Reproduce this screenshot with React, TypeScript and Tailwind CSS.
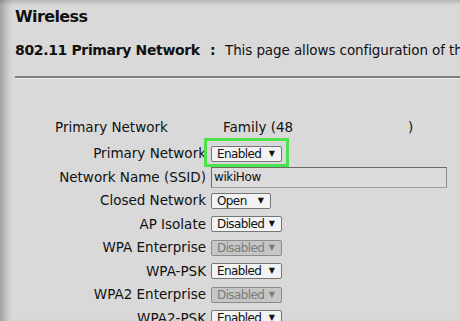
import React from "react";

type Ctrl =
  | { kind: "select"; value: string; w: number; disabled?: boolean; highlight?: boolean }
  | { kind: "input"; value: string };

const rows: { label: string; ctrl: Ctrl }[] = [
  { label: "Primary Network", ctrl: { kind: "select", value: "Enabled", w: 71, highlight: true } },
  { label: "Network Name (SSID)", ctrl: { kind: "input", value: "wikiHow" } },
  { label: "Closed Network", ctrl: { kind: "select", value: "Open", w: 60 } },
  { label: "AP Isolate", ctrl: { kind: "select", value: "Disabled", w: 71 } },
  { label: "WPA Enterprise", ctrl: { kind: "select", value: "Disabled", w: 71, disabled: true } },
  { label: "WPA-PSK", ctrl: { kind: "select", value: "Enabled", w: 71 } },
  { label: "WPA2 Enterprise", ctrl: { kind: "select", value: "Disabled", w: 71, disabled: true } },
  { label: "WPA2-PSK", ctrl: { kind: "select", value: "Enabled", w: 71 } },
];

function Select({ value, w, disabled, highlight }: { value: string; w: number; disabled?: boolean; highlight?: boolean }) {
  return (
    <div className="relative" style={{ width: w }}>
      {highlight && (
        <div className="absolute -left-[7px] -right-[7px] -top-[8px] -bottom-[5px] border-[3.5px] border-[#4be24b]" />
      )}
      <div
        className={
          disabled
            ? "relative flex h-[16px] items-center justify-between rounded-[2px] border border-[#8c8c8c] bg-[#c6c6c6] pl-[5px] pr-[6px] text-[12px] leading-none text-[#7a7a7a]"
            : "relative flex h-[16px] items-center justify-between rounded-[2px] border border-[#767676] bg-[#f3f3f3] pl-[5px] pr-[6px] text-[12px] leading-none text-[#111]"
        }
      >
        <span className="tracking-[-0.6px]">{value}</span>
        <span className="text-[8px]">▼</span>
      </div>
    </div>
  );
}

export default function App() {
  return (
    <div
      className="relative h-[321px] w-[460px] overflow-hidden bg-[#d9d9d9] text-[#111] shadow-[inset_11px_0_9px_-6px_rgba(0,0,0,0.28),inset_0_6px_5px_-4px_rgba(0,0,0,0.18)]"
      style={{ fontFamily: '"DejaVu Sans", Verdana, sans-serif' }}
    >
      <div className="pl-[15px] pt-[7px]">
        <div className="h-[20px] text-[16px] font-bold leading-[20px] tracking-[-0.6px]">Wireless</div>
        <div className="mt-[13px] flex h-[20px] items-center whitespace-nowrap leading-[20px]">
          <span className="w-[195px] shrink-0 text-[14px] font-bold tracking-[-0.35px]">802.11 Primary Network</span>
          <span className="w-[15px] shrink-0 text-[14px] font-bold">:</span>
          <span className="text-[13.5px] tracking-[-0.1px]">This page allows configuration of the</span>
        </div>
        <div className="mt-[16px] h-[3px] border-b border-[#ececec] bg-[#7e7e7e]" />
      </div>

      <div className="mt-[37px] flex h-[23px] items-center whitespace-nowrap text-[13.5px]">
        <span className="w-[223px] shrink-0 pl-[55px]">Primary Network</span>
        <span className="w-[185px] shrink-0">Family (48</span>
        <span>)</span>
      </div>

      <div className="mt-[3px] flex flex-col">
        {rows.map((r) => (
          <div key={r.label} className="flex h-[23.5px] items-center gap-[5px]">
            <div className="w-[206px] shrink-0 text-right text-[13.5px] leading-none">{r.label}</div>
            {r.ctrl.kind === "select" ? (
              <Select value={r.ctrl.value} w={r.ctrl.w} disabled={r.ctrl.disabled} highlight={r.ctrl.highlight} />
            ) : (
              <div className="flex h-[21px] w-[236px] items-center border border-t-[#6a6a6a] border-l-[#6a6a6a] border-r-[#8a8a8a] border-b-[#a0a0a0] bg-[#dcdcdc] pl-[2px] text-[12px] tracking-[-0.4px]">
                {r.ctrl.value}
              </div>
            )}
          </div>
        ))}
      </div>
    </div>
  );
}
